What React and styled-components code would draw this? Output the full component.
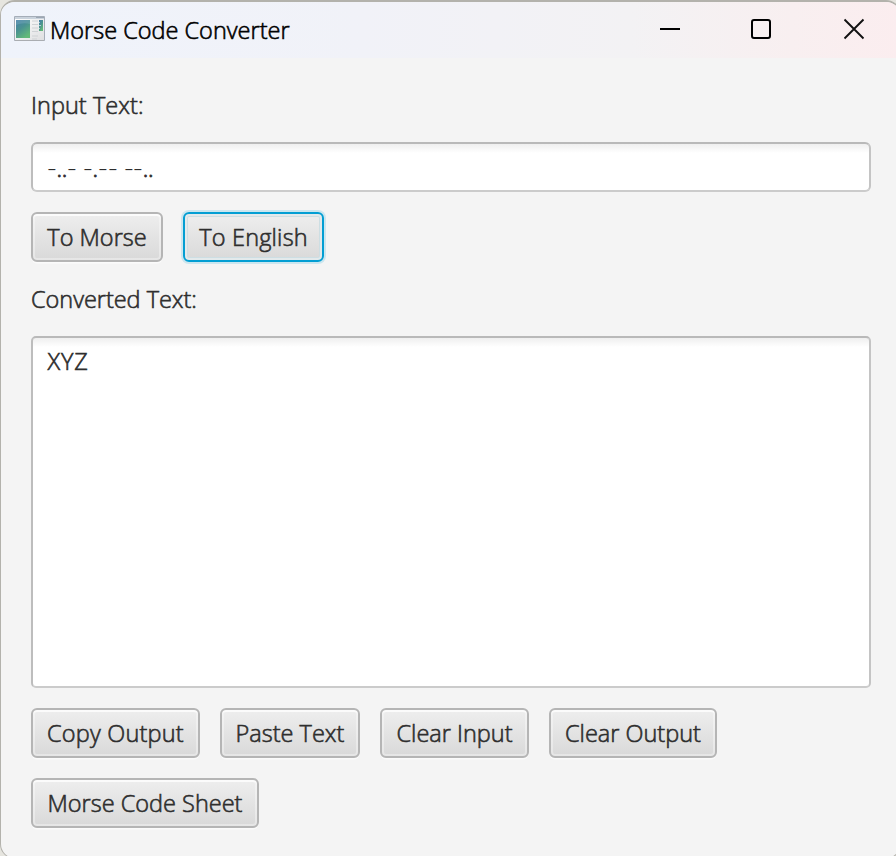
import React from "react";
import styled, { createGlobalStyle } from "styled-components";

const GlobalStyle = createGlobalStyle`
  *, *::before, *::after { box-sizing: border-box; }
  body {
    margin: 0;
    background: #e6e5df;
    overflow: hidden;
  }
`;

const Window = styled.main`
  width: 901px;
  height: 859px;
  display: flex;
  flex-direction: column;
  border: 1px solid #b3b2ac;
  border-top-width: 2px;
  border-radius: 15px;
  overflow: hidden;
  background: #f4f4f4;
  color: #2e2e2e;
  font: 300 23.5px/32px "Open Sans", "Noto Sans", sans-serif;
  -webkit-text-stroke: 0.6px currentColor;
`;

const TitleBar = styled.header`
  height: 56px;
  flex: none;
  display: flex;
  align-items: flex-start;
  background: linear-gradient(90deg, #eff3fb 0%, #f1f2f8 40%, #f3f2f4 70%, #f8eff0 88%, #fbedef 100%);
`;

const AppIcon = styled.svg`
  margin: 14px 0 0 13px;
  flex: none;
`;

const Title = styled.h1`
  margin: 12px 0 0 4px;
  font: inherit;
  color: #000;
  white-space: nowrap;
`;

const WindowControls = styled.div`
  margin: 16px 35px 0 auto;
  display: flex;
  gap: 70px;
  svg { display: block; }
`;

const Content = styled.section`
  width: 870px;
  padding: 31px 0 0 30px;
  display: flex;
  flex-direction: column;
`;

const Label = styled.div`
  height: 32px;
  margin-top: ${(p) => p.$top || 0}px;
  white-space: nowrap;
  letter-spacing: ${(p) => p.$track || 0}px;
`;

const Box = styled.div`
  width: 840px;
  height: ${(p) => p.$height}px;
  margin-top: 21px;
  padding: ${(p) => p.$pad}px 14.5px;
  border: 2px solid;
  border-color: #b9b9b9 #c4c4c4 #cbcbcb #bdbdbd;
  border-radius: ${(p) => p.$radius}px;
  background: linear-gradient(#efefef, #fff 9px);
  white-space: nowrap;
`;

const ConvertedText = styled.span`
  letter-spacing: 0.8px;
`;

const Morse = styled.span`
  display: flex;
  margin-left: -0.5px;
`;

const Signal = styled.span`
  display: block;
  width: ${(p) => (p.$kind === "-" ? 9.6 : p.$kind === "." ? 5.3 : 6.4)}px;
  display: flex;
  justify-content: center;
  white-space: pre;
  -webkit-text-stroke-width: ${(p) => (p.$kind === "-" ? 0 : 0.8)}px;
  transform: ${(p) => (p.$kind === "-" ? "translateY(-1px) scaleX(1.22)" : "none")};
`;

const ButtonRow = styled.div`
  display: flex;
  flex-wrap: wrap;
  gap: 20px;
  margin-top: 20px;
`;

const Button = styled.button`
  width: ${(p) => p.$width}px;
  height: 50px;
  padding: 0;
  border: 2px solid ${(p) => (p.$focused ? "#039ed3" : "#b5b5b5")};
  border-radius: 6px;
  background: linear-gradient(#eeeeee, #d9d9d9);
  box-shadow: ${(p) =>
    p.$focused
      ? "0 0 0 2px #cbe6ef, inset 0 0 0 2px #e3e9eb, inset 0 0 0 3px #cddee3"
      : "0 2px 0 -0.5px #fbfbfb, inset 0 2px 0 #fbfbfb, inset 0 0 0 2px rgba(255,255,255,.35)"};
  font: inherit;
  color: inherit;
  white-space: nowrap;
  letter-spacing: ${(p) => p.$track || 0}px;
  -webkit-text-stroke: inherit;
`;

function ProgramIcon() {
  return (
    <AppIcon width="32" height="26" viewBox="0 0 32 26">
      <defs>
        <linearGradient id="pane" x1="0" y1="0" x2=".6" y2="1">
          <stop offset="0" stopColor="#467faa" />
          <stop offset=".5" stopColor="#4a9291" />
          <stop offset="1" stopColor="#62b979" />
        </linearGradient>
        <linearGradient id="frame" x1="0" y1="0" x2="1" y2="1">
          <stop offset="0" stopColor="#fff" />
          <stop offset="1" stopColor="#dedfe1" />
        </linearGradient>
      </defs>
      <path d="M.5.5h30v24H.5z" fill="url(#frame)" stroke="#a5adb8" />
      <path d="M1 1h29v2H1z" fill="#c9d2dc" />
      <path d="M22 1.5h8" stroke="#9ba6b3" />
      <path d="M2 4h14v18H2z" fill="url(#pane)" />
      <path d="M2 9q7-3 14-1V4H2z" fill="#90bbc9" opacity=".3" />
      <path d="M18 5h6M18 8.5h6M18 12h6M18 15.5h6M18 20h6M18 23h5" stroke="#cfd2d5" />
      <path d="M25 4h4v11h-4z" fill="url(#pane)" />
      <path d="M25 6.5h1M25 9.5h2M25 12.5h1" stroke="#b5cdd8" />
      <path d="M1 24.5h29" stroke="#aaadb1" />
    </AppIcon>
  );
}

export default function App() {
  return (
    <>
      <GlobalStyle />
      <Window>
        <TitleBar>
          <ProgramIcon />
          <Title>Morse Code Converter</Title>
          <WindowControls>
            <svg width="22" height="22" viewBox="0 0 22 22">
              <path d="M1 11h20" stroke="#000" strokeWidth="2" />
            </svg>
            <svg width="22" height="22" viewBox="0 0 22 22">
              <rect x="1" y="2" width="18" height="18" rx="2" fill="none" stroke="#000" strokeWidth="2" />
            </svg>
            <svg width="22" height="22" viewBox="0 0 22 22">
              <path d="M1.5 1.5l19 19M20.5 1.5l-19 19" stroke="#111" strokeWidth="1.9" />
            </svg>
          </WindowControls>
        </TitleBar>
        <Content>
          <Label $track={0.05}>Input Text:</Label>
          <Box $height={50} $pad={8} $radius={6}>
            <Morse>
              {[..."-..- -.-- --.."].map((symbol, i) => (
                <Signal key={i} $kind={symbol}>{symbol}</Signal>
              ))}
            </Morse>
          </Box>
          <ButtonRow>
            <Button $width={132}>To Morse</Button>
            <Button $width={141} $track={0.2} $focused>To English</Button>
          </ButtonRow>
          <Label $top={21} $track={-0.03}>Converted Text:</Label>
          <Box $height={352} $pad={7} $radius={5}>
            <ConvertedText>XYZ</ConvertedText>
          </Box>
          <ButtonRow>
            <Button $width={169} $track={0.2}>Copy Output</Button>
            <Button $width={140}>Paste Text</Button>
            <Button $width={149}>Clear Input</Button>
            <Button $width={168}>Clear Output</Button>
            <Button $width={228}>Morse Code Sheet</Button>
          </ButtonRow>
        </Content>
      </Window>
    </>
  );
}
